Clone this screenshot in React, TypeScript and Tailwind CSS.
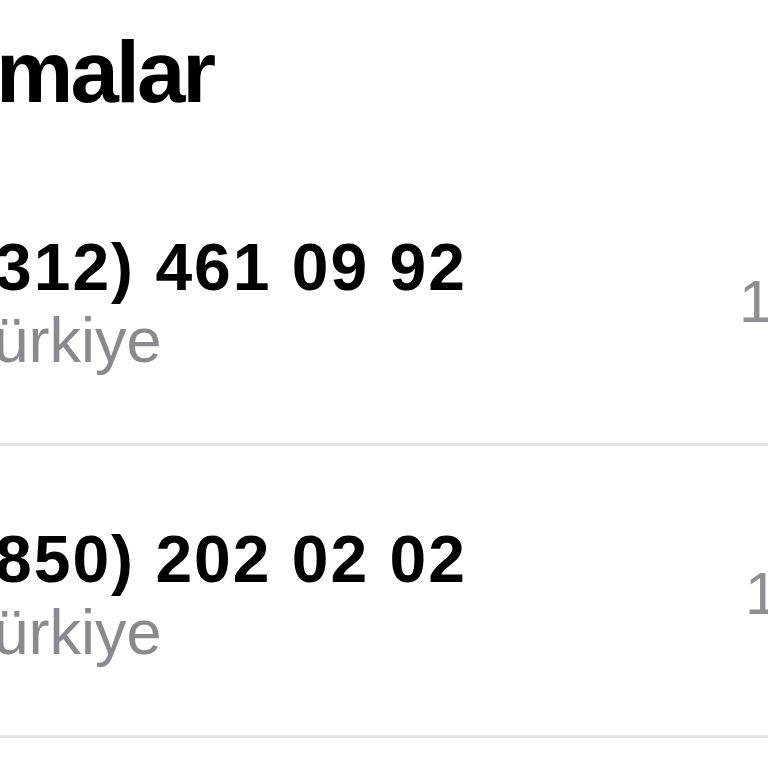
const calls = [
  { number: "(312) 461 09 92", place: "Türkiye", time: "11:42", timeShift: "ml-[3px]" },
  { number: "(850) 202 02 02", place: "Türkiye", time: "10:05", timeShift: "ml-[9px]" },
];

export default function App() {
  return (
    <div
      className="w-[768px] h-[768px] overflow-hidden bg-white text-black"
      style={{ fontFamily: '"Liberation Sans", Arial, sans-serif' }}
    >
      {/* Large title, scrolled partly off the left edge */}
      <h1 className="-ml-[140px] mt-[28px] whitespace-nowrap text-[87px] font-bold leading-none tracking-[-3px]">
        Aramalar
      </h1>

      <div className="mt-[39px]">
        {calls.map((c) => (
          <div
            key={c.number}
            className="flex w-[900px] border-b-[3px] border-[#e3e3e5] pb-[71px] pt-[80px]"
          >
            <div className="-ml-[43px] w-[779px] shrink-0">
              <p className="ml-[14px] whitespace-nowrap text-[66px] font-bold leading-none tracking-[2px]">
                {c.number}
              </p>
              <p className="-ml-[2px] mt-[9px] whitespace-nowrap text-[63px] leading-none text-[#8a8a8e]">
                {c.place}
              </p>
            </div>
            <span
              className={`${c.timeShift} mt-[38px] whitespace-nowrap text-[60px] leading-none text-[#8e8e93]`}
            >
              {c.time}
            </span>
          </div>
        ))}
      </div>
    </div>
  );
}
